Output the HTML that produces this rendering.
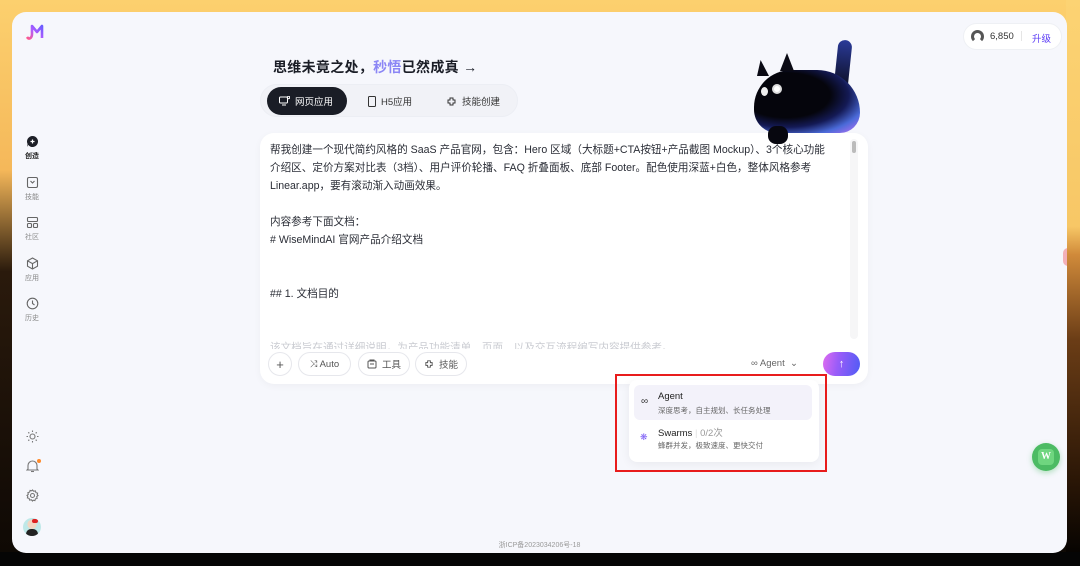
<!DOCTYPE html>
<html><head><meta charset="utf-8">
<style>
*{margin:0;padding:0;box-sizing:border-box}
body{width:1080px;height:566px;overflow:hidden;position:relative;font-family:"Liberation Sans","Noto Sans CJK SC",sans-serif;color:#1f2330;
background:linear-gradient(180deg,#fcd06e 0%,#f5b85a 30%,#2a1a0c 48%,#0d0804 100%);}
.rightbg{position:absolute;right:0;top:0;width:14px;height:566px;background:linear-gradient(180deg,#fcd373 0%,#f7c766 40%,#d08a3a 45%,#6b3d16 60%,#2a1606 85%,#000 100%)}
.bottombg{position:absolute;left:0;bottom:0;width:1080px;height:14px;background:#050505}
.panel{position:absolute;left:12px;top:12px;width:1055px;height:541px;background:#f6f7fc;border-radius:14px;overflow:hidden}
.abs{position:absolute}
.side{position:absolute;left:0;width:40px;text-align:center;font-size:7px;color:#888}
.side svg{display:block;margin:0 auto 3px}
.title{left:261px;top:45px;font-size:14px;font-weight:bold;color:#1a1d26;letter-spacing:.3px}
.tabs{left:248px;top:72px;width:258px;height:33px;background:#f1f2f7;border-radius:17px;border:1px solid #eceef4}
.tab{position:absolute;top:2px;height:28px;border-radius:14px;font-size:9.5px;display:flex;align-items:center;gap:5px;padding:0 12px;color:#333}
.card{left:248px;top:121px;width:608px;height:251px;background:#fff;border-radius:14px;box-shadow:0 2px 8px rgba(0,0,0,.04)}
.clip{position:absolute;left:0;top:0;width:590px;height:216px;overflow:hidden}
.txt{position:absolute;left:10px;top:8px;width:578px;font-size:10.6px;line-height:18px;color:#2a2d36}
.btn{position:absolute;top:219px;height:24px;border:1px solid #e6e7ec;border-radius:12px;font-size:9.5px;color:#555;display:flex;align-items:center;justify-content:center;gap:5px;background:#fff}
.dd{left:617px;top:368px;width:190px;height:82px;background:#fff;border-radius:8px;box-shadow:0 2px 10px rgba(0,0,0,.06)}
</style></head><body>
<div class="rightbg"></div><div class="bottombg"></div>
<div class="panel">
 <svg class="abs" style="left:12px;top:10px" width="20" height="20" viewBox="0 0 20 20"><defs><linearGradient id="lg" x1="0" y1="1" x2="1" y2="0"><stop offset="0" stop-color="#ff5a8a"/><stop offset=".5" stop-color="#b05cff"/><stop offset="1" stop-color="#6a5cff"/></linearGradient></defs><path d="M3 15c2 3 5 1 5-3V4l5 6 5-6v12" fill="none" stroke="url(#lg)" stroke-width="2.6" stroke-linejoin="round"/></svg>

 <div class="side" style="top:123px;color:#222;font-weight:bold"><svg width="13" height="13" viewBox="0 0 13 13"><path d="M6.5 1a5.5 5.5 0 1 1-4.3 8.9L1 12l.6-3A5.5 5.5 0 0 1 6.5 1z" fill="#1d1f27"/><path d="M6.5 4.5v4M4.5 6.5h4" stroke="#fff" stroke-width="1.2"/></svg>创造</div>
 <div class="side" style="top:164px"><svg width="13" height="13" viewBox="0 0 13 13" fill="none" stroke="#666" stroke-width="1.1"><rect x="1.5" y="1.5" width="10" height="10" rx="1.5"/><path d="M4.5 5l2 2 2-2"/></svg>技能</div>
 <div class="side" style="top:204px"><svg width="13" height="13" viewBox="0 0 13 13" fill="none" stroke="#666" stroke-width="1.1"><rect x="1.5" y="1.5" width="10" height="4" rx="1"/><rect x="1.5" y="7.5" width="4" height="4" rx="1"/><rect x="7.5" y="7.5" width="4" height="4" rx="1"/></svg>社区</div>
 <div class="side" style="top:245px"><svg width="13" height="13" viewBox="0 0 13 13" fill="none" stroke="#666" stroke-width="1.1"><path d="M6.5 1l5 2.8v5.4l-5 2.8-5-2.8V3.8z"/><path d="M1.5 3.8l5 2.8 5-2.8M6.5 6.6V12"/></svg>应用</div>
 <div class="side" style="top:285px"><svg width="13" height="13" viewBox="0 0 13 13" fill="none" stroke="#666" stroke-width="1.1"><circle cx="6.5" cy="6.5" r="5.3"/><path d="M6.5 3.5v3l2 1.5"/></svg>历史</div>

 <svg class="abs" style="left:14px;top:418px" width="13" height="13" viewBox="0 0 13 13" fill="none" stroke="#777" stroke-width="1.1"><circle cx="6.5" cy="6.5" r="2.5"/><path d="M6.5 .5v1.5M6.5 11v1.5M.5 6.5H2M11 6.5h1.5M2.3 2.3l1 1M9.7 9.7l1 1M2.3 10.7l1-1M9.7 3.3l1-1"/></svg>
 <svg class="abs" style="left:14px;top:447px" width="13" height="14" viewBox="0 0 13 14" fill="none" stroke="#777" stroke-width="1.1"><path d="M2 10V6.5a4.5 4.5 0 0 1 9 0V10l1 1H1z"/><path d="M5 12.5h3"/></svg>
 <div class="abs" style="left:25px;top:447px;width:4px;height:4px;border-radius:50%;background:#ff8a2a"></div>
 <svg class="abs" style="left:14px;top:477px" width="13" height="13" viewBox="0 0 13 13" fill="none" stroke="#777" stroke-width="1.1"><circle cx="6.5" cy="6.5" r="2"/><path d="M6.5 1l1.2 1.3 1.7-.4.5 1.7 1.7.5-.4 1.7L12 6.5l-1.3 1.2.4 1.7-1.7.5-.5 1.7-1.7-.4L6.5 12l-1.2-1.3-1.7.4-.5-1.7-1.7-.5.4-1.7L1 6.5l1.3-1.2-.4-1.7 1.7-.5.5-1.7 1.7.4z"/></svg>
 <div class="abs" style="left:11px;top:506px;width:18px;height:18px;border-radius:50%;background:radial-gradient(circle at 50% 35%,#f2d6c2 30%,#bfe8e8 32%);overflow:hidden"><div style="position:absolute;left:3px;top:11px;width:12px;height:8px;background:#222;border-radius:5px 5px 0 0"></div><div style="position:absolute;left:9px;top:1px;width:6px;height:4px;background:#d22;border-radius:3px"></div></div>

 <div class="abs title">思维未竟之处，<span style="color:#8b86f5">秒悟</span>已然成真 →</div>
 <div class="abs tabs">
  <div class="tab" style="left:6px;background:#1a1d26;color:#fff;width:80px"><svg width="11" height="10" viewBox="0 0 11 10" fill="none" stroke="#fff" stroke-width="1"><rect x=".5" y="1" width="8" height="6" rx="1"/><path d="M3 9h4"/><circle cx="9.5" cy="1.5" r="1.2"/></svg>网页应用</div>
  <div class="tab" style="left:95px"><svg width="8" height="11" viewBox="0 0 8 11" fill="none" stroke="#333" stroke-width="1"><rect x=".5" y=".5" width="7" height="10" rx="1"/></svg>H5应用</div>
  <div class="tab" style="left:173px"><svg width="11" height="11" viewBox="0 0 11 11" fill="none" stroke="#333" stroke-width="1"><path d="M2 4h2V2h3v2h2v3H7v2H4V7H2z"/></svg>技能创建</div>
 </div>

 <div class="abs card">
  <div class="clip"><div class="txt">帮我创建一个现代简约风格的 SaaS 产品官网，包含：Hero 区域（大标题+CTA按钮+产品截图 Mockup）、3个核心功能<br>介绍区、定价方案对比表（3档）、用户评价轮播、FAQ 折叠面板、底部 Footer。配色使用深蓝+白色，整体风格参考<br>Linear.app，要有滚动渐入动画效果。<br><br>内容参考下面文档：<br># WiseMindAI 官网产品介绍文档<br><br><br>## 1. 文档目的<br><br><br><span style="color:#c9cbd1">该文档旨在通过详细说明，为产品功能清单、页面、以及交互流程编写内容提供参考。</span></div></div>
  <div class="abs" style="left:590px;top:6px;width:8px;height:200px;background:#f6f6f7;border-radius:4px"><div style="margin:2px auto;width:4px;height:12px;background:#bbb;border-radius:2px"></div></div>
  <div class="btn" style="left:8px;width:24px;font-size:13px">+</div>
  <div class="btn" style="left:38px;width:53px">⤨ Auto</div>
  <div class="btn" style="left:98px;width:52px"><svg width="10" height="10" viewBox="0 0 10 10" fill="none" stroke="#555" stroke-width="1"><rect x="1" y="2" width="8" height="7" rx="1"/><path d="M3 2V1h4v1M3 5h4"/></svg> 工具</div>
  <div class="btn" style="left:155px;width:52px"><svg width="10" height="10" viewBox="0 0 11 11" fill="none" stroke="#555" stroke-width="1"><path d="M2 4h2V2h3v2h2v3H7v2H4V7H2z"/></svg> 技能</div>
  <div class="abs" style="left:491px;top:225px;font-size:9.5px;color:#666">∞ Agent&nbsp;&nbsp;⌄</div>
  <div class="abs" style="left:563px;top:219px;width:37px;height:24px;border-radius:12px;background:linear-gradient(100deg,#e06cf0 0%,#9a5cf8 40%,#4f5cf5 100%);color:#fff;font-size:11px;text-align:center;line-height:24px">↑</div>
 </div>

 <!-- cat -->
 <div class="abs" style="left:824px;top:28px;width:14px;height:50px;border-radius:7px;background:linear-gradient(#2a3a98,#0b0c1c);transform:rotate(6deg)"></div>
 <div class="abs" style="left:742px;top:58px;width:106px;height:63px;border-radius:48px 55px 26px 30px;background:radial-gradient(ellipse at 30% 40%,#05050c 42%,#141a55 60%,#4a6ad8 78%,#a070f0 94%)"></div>
 <div class="abs" style="left:745px;top:48px;width:12px;height:16px;background:#0a0a14;clip-path:polygon(0 100%,30% 0,100% 100%)"></div>
 <div class="abs" style="left:768px;top:41px;width:14px;height:18px;background:#0a0a14;clip-path:polygon(0 100%,50% 0,100% 100%)"></div>
 <div class="abs" style="left:760px;top:72px;width:10px;height:10px;border-radius:50%;background:#fff;border:2px solid #ddd"></div>
 <div class="abs" style="left:749px;top:75px;width:7px;height:9px;border-radius:50%;background:#eee"></div>
 <div class="abs" style="left:756px;top:114px;width:20px;height:18px;border-radius:8px;background:#07070f"></div>

 <div class="abs" style="left:603px;top:362px;width:212px;height:98px;border:2px solid #e81c1c"></div>
 <div class="abs dd">
  <div class="abs" style="left:5px;top:5px;width:178px;height:35px;background:#f3f2fa;border-radius:6px"></div>
  <div class="abs" style="left:12px;top:16px;font-size:10px;color:#333">∞</div>
  <div class="abs" style="left:29px;top:11px;font-size:9.5px;color:#222">Agent</div>
  <div class="abs" style="left:29px;top:25px;font-size:7.5px;color:#666">深度思考，自主规划、长任务处理</div>
  <div class="abs" style="left:11px;top:52px;font-size:9px;color:#7b5cf5">❋</div>
  <div class="abs" style="left:29px;top:45px;font-size:9.5px;color:#222">Swarms <span style="color:#ddd">|</span> <span style="color:#999">0/2次</span></div>
  <div class="abs" style="left:29px;top:60px;font-size:7.5px;color:#666">蜂群并发，极致速度、更快交付</div>
 </div>

 <div class="abs" style="left:951px;top:11px;width:99px;height:27px;background:#fff;border-radius:14px;border:1px solid #eef0f4"></div>
 <div class="abs" style="left:959px;top:18px;width:13px;height:13px;border-radius:50%;border:3px solid #555;border-bottom-color:transparent"></div>
 <div class="abs" style="left:978px;top:19px;font-size:9.5px;color:#333">6,850</div>
 <div class="abs" style="left:1009px;top:19px;width:1px;height:10px;background:#e5e5e5"></div>
 <div class="abs" style="left:1020px;top:19px;font-size:9.5px;color:#5b3cf5">升级</div>

 <div class="abs" style="left:1051px;top:236px;width:10px;height:18px;border-radius:9px;background:#f3b0b8"></div>
 <div class="abs" style="left:1020px;top:431px;width:28px;height:28px;border-radius:50%;background:#4cbb63;box-shadow:0 2px 6px rgba(76,187,99,.4)"><div style="margin:6px;width:16px;height:16px;border-radius:4px;background:#6fd67f;color:#fff;font:bold 10px 'Liberation Serif',serif;text-align:center;line-height:16px">W</div></div>

 <div class="abs" style="left:0;width:1055px;top:528px;text-align:center;font-size:7px;color:#999">浙ICP备2023034206号-18</div>
</div>
</body></html>
